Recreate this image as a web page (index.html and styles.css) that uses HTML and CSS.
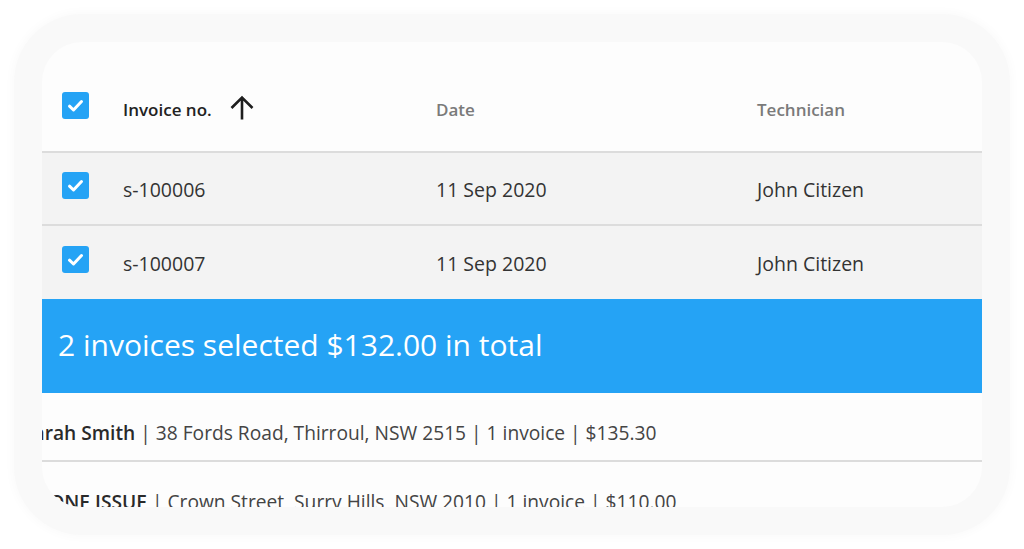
FILE: index.html
```html
<!DOCTYPE html>
<html lang="en">
<head>
<meta charset="utf-8">
<title>Invoices</title>
<link rel="stylesheet" href="styles.css">
</head>
<body>
<div class="halo">
  <div class="card">
    <div class="row head">
      <span class="cb"><svg viewBox="0 0 27 27" width="27" height="27"><path d="M7.5 14.2l4 3.8 8-8.5" fill="none" stroke="#fff" stroke-width="3" stroke-linecap="round" stroke-linejoin="round"/></svg></span>
      <span class="col first">Invoice no. <svg class="arrow" viewBox="0 0 26 26" width="26" height="26"><path d="M13 24.5V2.5M2.5 13L13 2.5 23.5 13" fill="none" stroke="#1e1e1e" stroke-width="2.6" stroke-linejoin="miter"/></svg></span>
      <span class="col muted">Date</span>
      <span class="col muted">Technician</span>
    </div>
    <div class="row item bordered">
      <span class="cb"><svg viewBox="0 0 27 27" width="27" height="27"><path d="M7.5 14.2l4 3.8 8-8.5" fill="none" stroke="#fff" stroke-width="3" stroke-linecap="round" stroke-linejoin="round"/></svg></span>
      <span class="col">s-100006</span>
      <span class="col">11 Sep 2020</span>
      <span class="col">John Citizen</span>
    </div>
    <div class="row item">
      <span class="cb"><svg viewBox="0 0 27 27" width="27" height="27"><path d="M7.5 14.2l4 3.8 8-8.5" fill="none" stroke="#fff" stroke-width="3" stroke-linecap="round" stroke-linejoin="round"/></svg></span>
      <span class="col">s-100007</span>
      <span class="col">11 Sep 2020</span>
      <span class="col">John Citizen</span>
    </div>
    <div class="summary">2 invoices selected $132.00 in total</div>
    <div class="customer bordered"><p class="line"><b>Sarah Smith</b> | 38 Fords Road, Thirroul, NSW 2515 | 1 invoice | $135.30</p></div>
    <div class="customer last"><p class="line"><b>PHONE ISSUE</b> | Crown Street, Surry Hills, NSW 2010 | 1 invoice | $110.00</p></div>
  </div>
</div>
</body>
</html>
```

FILE: styles.css
```css
html, body {
  margin: 0;
  padding: 0;
  background: #ffffff;
}
body {
  padding: 14px 14px;
  font-family: "Open Sans", "Noto Sans", sans-serif;
  box-sizing: border-box;
  height: 549px;
}
.halo {
  background: #f9f9f9;
  border-radius: 68px;
  padding: 28px;
  height: 521px;
  box-sizing: border-box;
  box-shadow: 0 0 8px 3px #fbfbfb;
}
.card {
  background: #fdfdfd;
  border-radius: 40px;
  overflow: hidden;
  height: 465px;
  display: flex;
  flex-direction: column;
}
.row {
  display: grid;
  grid-template-columns: 61px 313px 321px 1fr;
  align-items: center;
  padding-left: 20px;
  box-sizing: border-box;
  flex: none;
}
.head {
  height: 111px;
  padding-top: 25px;
  border-bottom: 2px solid #dcdcdc;
  font-size: 17px;
  font-weight: 600;
  color: #7a7a7a;
}
.head .first {
  color: #222;
  display: flex;
  align-items: center;
}
.arrow {
  margin-left: 17px;
  margin-top: -2px;
}
.item {
  background: #f3f3f3;
  height: 73px;
  font-size: 19.5px;
  color: #333;
  padding-top: 1px;
}
.bordered {
  border-bottom: 2px solid #dcdcdc;
}
.cb {
  width: 27px;
  height: 27px;
  border-radius: 3px;
  background: #25a3f5;
  display: block;
  margin-bottom: 8px;
}
.cb svg {
  display: block;
}
.col {
  white-space: nowrap;
}
.summary {
  flex: none;
  height: 94px;
  background: #25a3f5;
  color: #ffffff;
  font-size: 30px;
  display: flex;
  align-items: center;
  padding-left: 16px;
  padding-bottom: 4px;
  box-sizing: border-box;
}
.customer {
  flex: none;
  height: 69px;
  box-sizing: border-box;
  padding-top: 27px;
  font-size: 19.2px;
  color: #444;
}
.customer.last {
  border: none;
}
.line {
  margin: 0 0 0 -19px;
  line-height: 26px;
  white-space: nowrap;
}
.line b {
  font-weight: 600;
  color: #2a2a2a;
}
```
